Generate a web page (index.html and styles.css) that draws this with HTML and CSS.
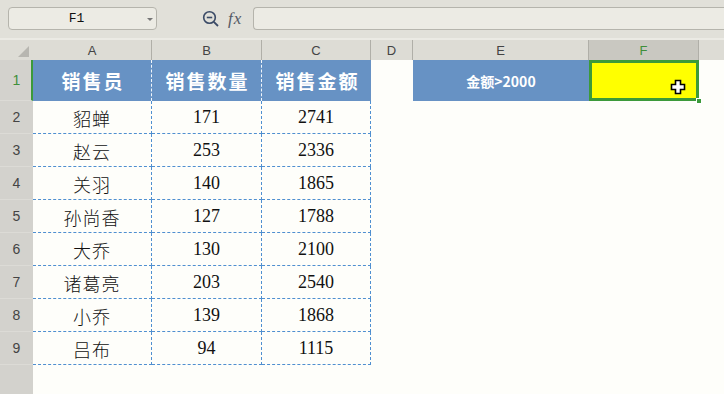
FILE: index.html
```html
<!DOCTYPE html>
<html lang="zh">
<head>
<meta charset="utf-8">
<title>Sheet</title>
<link rel="stylesheet" href="styles.css">
</head>
<body>
<div class="app">
  <div class="toolbar">
    <div class="namebox"><span class="namebox-text">F1</span><span class="caret"></span></div>
    <div class="tools">
      <svg class="zoom-ic" width="18" height="18" viewBox="0 0 18 18"><circle cx="7.5" cy="7.5" r="5.8" fill="none" stroke="#3a4a66" stroke-width="1.6"/><line x1="4.8" y1="7.5" x2="10.2" y2="7.5" stroke="#3a4a66" stroke-width="1.6"/><line x1="11.8" y1="11.8" x2="16" y2="16" stroke="#3a4a66" stroke-width="1.8"/></svg>
      <span class="fx">fx</span>
    </div>
    <div class="formula"></div>
  </div>
  <div class="sheet">
    <div class="ch corner"><span class="tri"></span></div>
    <div class="ch">A</div>
    <div class="ch">B</div>
    <div class="ch">C</div>
    <div class="ch">D</div>
    <div class="ch">E</div>
    <div class="ch ch-active">F</div>
    <div class="ch ch-last"></div>

    <div class="rh rh-active">1</div>
    <div class="c head sep">销售员</div>
    <div class="c head sep">销售数量</div>
    <div class="c head">销售金额</div>
    <div class="c blank"></div>
    <div class="c crit">金额&gt;2000</div>
    <div class="c sel"><span class="handle"></span>
      <svg class="cursor" width="16" height="16" viewBox="0 0 16 16"><path d="M5.5 1.5h5v4h4v5h-4v4h-5v-4h-4v-5h4z" fill="#fff" stroke="#000" stroke-width="1.6"/></svg>
    </div>
    <div class="c blank"></div>

    <div class="rh">2</div><div class="c d">貂蝉</div><div class="c d n">171</div><div class="c d n">2741</div><div class="c blank"></div><div class="c blank"></div><div class="c blank"></div><div class="c blank"></div>
    <div class="rh">3</div><div class="c d">赵云</div><div class="c d n">253</div><div class="c d n">2336</div><div class="c blank"></div><div class="c blank"></div><div class="c blank"></div><div class="c blank"></div>
    <div class="rh">4</div><div class="c d">关羽</div><div class="c d n">140</div><div class="c d n">1865</div><div class="c blank"></div><div class="c blank"></div><div class="c blank"></div><div class="c blank"></div>
    <div class="rh">5</div><div class="c d">孙尚香</div><div class="c d n">127</div><div class="c d n">1788</div><div class="c blank"></div><div class="c blank"></div><div class="c blank"></div><div class="c blank"></div>
    <div class="rh">6</div><div class="c d">大乔</div><div class="c d n">130</div><div class="c d n">2100</div><div class="c blank"></div><div class="c blank"></div><div class="c blank"></div><div class="c blank"></div>
    <div class="rh">7</div><div class="c d">诸葛亮</div><div class="c d n">203</div><div class="c d n">2540</div><div class="c blank"></div><div class="c blank"></div><div class="c blank"></div><div class="c blank"></div>
    <div class="rh">8</div><div class="c d">小乔</div><div class="c d n">139</div><div class="c d n">1868</div><div class="c blank"></div><div class="c blank"></div><div class="c blank"></div><div class="c blank"></div>
    <div class="rh">9</div><div class="c d">吕布</div><div class="c d n">94</div><div class="c d n">1115</div><div class="c blank"></div><div class="c blank"></div><div class="c blank"></div><div class="c blank"></div>
    <div class="rh rh-fill"></div>
  </div>
</div>
</body>
</html>
```

FILE: styles.css
```css
* { box-sizing: border-box; }
html, body { margin: 0; padding: 0; }
body {
  width: 724px;
  height: 394px;
  overflow: hidden;
  background: #fefefa;
  font-family: "Liberation Sans", "Noto Sans CJK SC", sans-serif;
}
.app { display: flex; flex-direction: column; height: 394px; }

.toolbar {
  height: 40px;
  flex: none;
  display: flex;
  align-items: flex-start;
  padding: 7px 0 0 8px;
  background: #e1e0d9;
  border-bottom: 2px solid #ebeae4;
}
.namebox {
  position: relative;
  width: 149px;
  height: 23px;
  border: 1px solid #b5b4ac;
  border-radius: 4px;
  background: #ecebe4;
  display: flex;
  align-items: center;
  justify-content: center;
}
.namebox-text {
  font-family: "Liberation Mono", monospace;
  font-size: 13px;
  color: #111;
  margin-right: 12px;
}
.caret {
  position: absolute;
  right: 3px;
  top: 10px;
  width: 0; height: 0;
  border-left: 3px solid transparent;
  border-right: 3px solid transparent;
  border-top: 3px solid #777;
}
.tools {
  width: 96px;
  height: 23px;
  display: flex;
  align-items: center;
  padding-left: 45px;
  gap: 8px;
}
.zoom-ic { display: block; }
.fx {
  font-family: "Liberation Serif", serif;
  font-style: italic;
  font-size: 17px;
  color: #555a66;
  letter-spacing: 1px;
}
.formula {
  flex: 1;
  height: 23px;
  border: 1px solid #b5b4ac;
  border-right: none;
  border-radius: 4px 0 0 4px;
  background: #ecebe4;
}

.sheet {
  flex: 1;
  display: grid;
  grid-template-columns: 33px 119px 110px 109px 42px 176px 110px 1fr;
  grid-template-rows: 20px 41px repeat(8, 33px) 1fr;
}
.ch {
  background: #dddcd5;
  color: #444;
  font-size: 13px;
  display: flex;
  align-items: center;
  justify-content: center;
  border-right: 1px solid #b0afa8;
}
.ch-last { border-right: none; }
.ch-active { background: #c9c8c1; color: #3f8f3a; }
.corner { position: relative; background: #dddcd5; border-right: none; }
.tri {
  position: absolute;
  right: 4px;
  bottom: 3px;
  width: 0; height: 0;
  border-left: 11px solid transparent;
  border-bottom: 11px solid #b7b6b0;
}
.rh {
  background: #d3d2cd;
  color: #444;
  font-size: 14px;
  display: flex;
  align-items: center;
  justify-content: center;
  border-bottom: 1px solid #dcdbd6;
}
.rh-active { color: #3f8f3a; border-right: 2px solid #3c9a3a; padding-left: 2px; }
.rh-fill { grid-column: 1; border-bottom: none; }

.c {
  display: flex;
  align-items: center;
  justify-content: center;
  position: relative;
}
.head {
  background: #6792c4;
  color: #fff;
  font-family: "Noto Sans CJK SC", sans-serif;
  font-weight: bold;
  font-size: 19px;
  letter-spacing: 2px;
  padding-left: 2px;
}
.head.sep { border-right: 1px dashed #f2f6fb; }
.crit {
  background: #6792c4;
  color: #fff;
  font-family: "Noto Sans CJK SC", sans-serif;
  font-weight: bold;
  font-size: 14px;
}
.sel {
  background: #ffff00;
  border: 3px solid #3c9a3a;
}
.handle {
  position: absolute;
  right: -6px;
  bottom: -6px;
  width: 6px;
  height: 6px;
  background: #3c9a3a;
  border: 1px solid #fff;
}
.cursor {
  position: absolute;
  left: 78px;
  top: 16px;
}
.d {
  border-right: 1px dashed #4f8fd0;
  border-bottom: 1px dashed #4f8fd0;
  font-family: "Liberation Serif", "Noto Sans CJK SC", serif;
  font-weight: 300;
  font-size: 18px;
  letter-spacing: 1px;
  color: #111;
  padding-top: 1px;
}
.d.n { letter-spacing: 0; font-weight: normal; }
.blank { background: transparent; }
```
